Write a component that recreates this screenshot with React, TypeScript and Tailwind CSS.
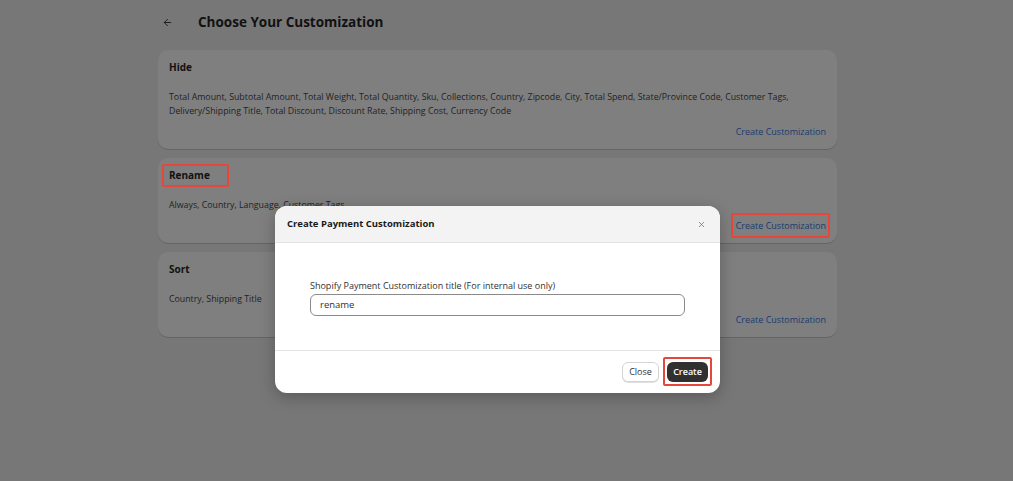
import { ArrowLeft, X } from 'lucide-react';

const font = { fontFamily: '"Open Sans", "Noto Sans", sans-serif' };

interface CardProps {
  title: string;
  body: string;
  markTitle?: boolean;
  markLink?: boolean;
}

function Card({ title, body, markTitle, markLink }: CardProps) {
  return (
    <div className="rounded-[10px] bg-[#7f7f7f] shadow-[0_1px_0_rgba(0,0,0,0.15)] px-[11px] pt-[10px] pb-[10px]">
      <div className="h-[14px] flex items-center">
        <span className="relative text-[10px] font-bold text-[#111]">
          {title}
          {markTitle && (
            <span className="absolute -left-[7px] -right-[19px] -top-[4px] -bottom-[4px] border-2 border-[#e8463a] rounded-[2px]" />
          )}
        </span>
      </div>
      <p className="mt-[16px] text-[8.8px] leading-[14px] text-[#222]">{body}</p>
      <div className="mt-[7px] flex justify-end">
        <span className="relative text-[9px] leading-[14px] text-[#1a3a6e]">
          Create Customization
          {markLink && (
            <span className="absolute -left-[5px] -right-[4px] -top-[6px] -bottom-[5px] border-2 border-[#e8463a] rounded-[2px]" />
          )}
        </span>
      </div>
    </div>
  );
}

export default function App() {
  return (
    <div className="relative w-[1013px] h-[481px] bg-[#777777] overflow-hidden" style={font}>
      <div className="ml-[158px] w-[679px]">
        <div className="h-[42px] flex items-center pl-[4px] pt-[2px]">
          <ArrowLeft className="w-[11px] h-[11px] text-[#1a1a1a]" strokeWidth={2} />
          <h1 className="ml-[25px] text-[13.5px] font-bold text-[#111]">Choose Your Customization</h1>
        </div>
        <div className="mt-[8px] flex flex-col gap-[9px]">
          <Card
            title="Hide"
            body="Total Amount, Subtotal Amount, Total Weight, Total Quantity, Sku, Collections, Country, Zipcode, City, Total Spend, State/Province Code, Customer Tags, Delivery/Shipping Title, Total Discount, Discount Rate, Shipping Cost, Currency Code"
          />
          <Card title="Rename" body="Always, Country, Language, Customer Tags" markTitle markLink />
          <Card title="Sort" body="Country, Shipping Title" />
        </div>
      </div>

      <div className="absolute left-[275px] top-[206px] w-[445px] rounded-[12px] bg-white overflow-hidden shadow-[0_4px_16px_rgba(0,0,0,0.25)]">
        <div className="h-[37px] bg-[#f3f3f3] border-b border-[#e3e3e3] flex items-center justify-between pl-[12px] pr-[14px]">
          <span className="text-[9.5px] font-bold text-[#1a1a1a]">Create Payment Customization</span>
          <X className="w-[9px] h-[9px] text-[#6b6b6b]" strokeWidth={2} />
        </div>
        <div className="px-[35px] pt-[36px] pb-[34px]">
          <div className="text-[9px] leading-[13px] text-[#303030]">
            Shopify Payment Customization title (For internal use only)
          </div>
          <div className="mt-[2px] h-[22px] rounded-[6px] border border-[#8a8a8a] flex items-center px-[9px] text-[9.5px] text-[#303030]">
            rename
          </div>
        </div>
        <div className="h-[43px] border-t border-[#e3e3e3] flex items-center justify-end gap-[8px] pr-[12px]">
          <button className="h-[20px] w-[37px] rounded-[6px] border border-[#d4d4d4] bg-white text-[9px] text-[#303030] shadow-[0_1px_0_rgba(0,0,0,0.12)]">
            Close
          </button>
          <span className="relative flex">
            <button className="h-[20px] w-[41px] rounded-[6px] bg-[#303030] text-[9px] font-semibold text-white">
              Create
            </button>
            <span className="absolute -left-[4px] -right-[4px] -top-[5px] -bottom-[4px] border-2 border-[#e8463a] rounded-[2px]" />
          </span>
        </div>
      </div>
    </div>
  );
}
